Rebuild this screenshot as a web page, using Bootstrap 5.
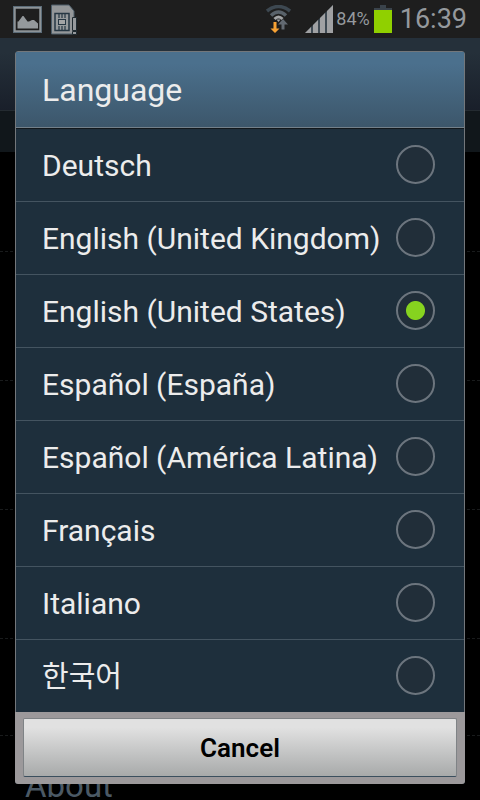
<!DOCTYPE html>
<html lang="en">
<head>
<meta charset="utf-8">
<meta name="viewport" content="width=device-width, initial-scale=1">
<title>Language</title>
<link href="https://cdn.jsdelivr.net/npm/bootstrap@5.3.0/dist/css/bootstrap.min.css" rel="stylesheet">
<style>
  body { background: #000; color: #ececec; font-family: Roboto, "Noto Sans CJK KR", sans-serif; }
  .status-bar { height: 38px; background: #1e1e1e; color: #95999d; padding: 0 13px; }
  .status-bar svg { display: block; flex: none; }
  .signal { margin-left: 14px; }
  .percent { font-size: 18px; line-height: 38px; margin: 0 4px 0 3px; }
  .clock { font-size: 27px; line-height: 38px; margin-left: 8px; }
  .screen-title { height: 73px; background: linear-gradient(#25303a 20%, #191f2a); border-bottom: 1px solid #242b31; }
  .screen-section { height: 41px; background: #11171b; }
  .setting { height: 129px; border-bottom: 1px dashed #191b1c; }
  .setting-first { height: 100px; }
  .setting-last { height: 97px; }
  .about { padding: 34px 25px 0; font-size: 33px; line-height: 32px; height: 66px; color: #4b5965; }
  .language-dialog { top: 51px; left: 15px; right: 15px; border-radius: 3px; background: #1e2f3c; overflow: hidden; }
  .dialog-top { border: 1px solid #73777b; border-bottom: 0; border-radius: 3px 3px 0 0; }
  .dialog-title { height: 77px; margin: 0; padding-left: 26px; font-size: 32px; line-height: 77px; font-weight: 400;
    background: linear-gradient(#4b708d 15%, #3c566a); border-bottom: 1px solid #12181c; box-shadow: inset 0 -1px #73808a; }
  .option { height: 73px; padding: 0 29px 0 26px; font-size: 30px; line-height: 36px; border-bottom: 1px solid #445460; cursor: pointer; white-space: nowrap; }
  .option:last-child { height: 72px; border-bottom: 0; }
  .option span { padding-top: 2px; }
  .option span:lang(ko) { font-size: 29px; }
  .option input { appearance: none; flex: none; width: 39px; height: 39px; margin: 0 0 2px; border: 2px solid #6c757e; border-radius: 50%; background: #212e39; }
  .option input:checked { background: radial-gradient(circle, #86d31f 0 9px, #212e39 10px); }
  .dialog-actions { background: #9c999b; padding: 6px 8px 7px; }
  .cancel { height: 59px; border: 1px solid #7f8386; border-bottom-color: #3b4f5e; border-radius: 2px; color: #000;
    background: linear-gradient(#e1e1e1 15%, #a8aaaa); font-size: 26px; line-height: 30px; font-weight: 600; }
</style>
<script src="https://cdn.jsdelivr.net/npm/bootstrap@5.3.0/dist/js/bootstrap.bundle.min.js"></script>
</head>
<body>
<div class="position-relative vh-100 overflow-hidden">
  <header class="status-bar d-flex align-items-center">
    <svg width="29" height="27" viewBox="0 0 29 27" aria-hidden="true">
      <rect x="1.500" y="1.500" width="26" height="24" fill="#1e1e1e" stroke="#8d9397" stroke-width="2.500"/>
      <rect x=".5" y=".5" width="28" height="26" fill="none" stroke="#5c6c78"/>
      <path d="M4.500 22.500v-7h1l4-5.500h1l4 5.500h1.500l3-1.500h2l4 3.500v5z" fill="#94999c"/>
    </svg>
    <svg class="ms-2" width="27" height="31" viewBox="0 0 27 31" aria-hidden="true">
      <path d="M1.500 1H19l5 6v23H1.500z" fill="#949799" stroke="#4c5d69"/>
      <path d="M5 9.500h14v17H5z" fill="#969a9c" stroke="#263743" stroke-width="1.500"/>
      <path d="M9 10v4m3-4v4m3-4v4M9 22v4m3-4v4m3-4v4" stroke="#263743" stroke-width="1.200"/>
      <rect x="8.500" y="15.500" width="7" height="5" fill="#a2a4a5" stroke="#263743"/>
      <path d="M22.500 13.500h4v13h-4zM22.500 27.500h4v3h-4z" fill="#96999c" stroke="#1e292f"/>
    </svg>
    <svg class="ms-auto" width="25" height="28" viewBox="0 0 25 28" aria-hidden="true">
      <g fill="none" stroke-width="3.500">
        <path d="M1 6Q12.500-3 24 6" stroke="#3d4851"/>
        <path d="M5 10.500Q12.500 3.500 20 10.500" stroke="#59626a"/>
        <path d="M8.500 14Q12.500 10 16.500 14" stroke="#a2a4a6" stroke-width="3"/>
      </g>
      <path d="M10.500 14.500h4l-2 2.500z" fill="#a2a4a6"/>
      <path d="M7.500 17h3v6.500h3L9 28l-4.500-4.500h3z" fill="#f8a234"/>
      <path d="M17 14l5 5.500h-3.500v5h-3v-5H12z" fill="#626971"/>
    </svg>
    <svg class="signal" width="28" height="28" viewBox="0 0 28 28" aria-hidden="true">
      <path d="M0 28L28 0v28z" fill="#3f4a53"/>
      <path d="M0 28l6-6v6zM8 28v-8l5-5v13zM15 28V13l5-5v20zM22 28V6l6-6v28z" fill="#a0a1a3"/>
    </svg>
    <span class="percent">84%</span>
    <svg width="18" height="28" viewBox="0 0 18 28" aria-hidden="true">
      <path d="M6 0h6v3h6v2H0V3h6z" fill="#3a434b"/>
      <path d="M0 5h18v23H0z" fill="#90d000"/>
    </svg>
    <span class="clock">16:39</span>
  </header>
  <main aria-hidden="true">
    <div class="screen-title"></div>
    <div class="screen-section"></div>
    <div class="setting setting-first"></div>
    <div class="setting"></div>
    <div class="setting"></div>
    <div class="setting"></div>
    <div class="setting setting-last"></div>
    <div class="about">About</div>
  </main>

  <form class="language-dialog position-absolute" role="dialog" aria-labelledby="dialog-title">
    <div class="dialog-top">
      <h1 class="dialog-title" id="dialog-title">Language</h1>
      <div role="radiogroup" aria-labelledby="dialog-title">
        <label class="option d-flex align-items-center justify-content-between" for="de"><span>Deutsch</span><input type="radio" name="language" id="de"></label>
        <label class="option d-flex align-items-center justify-content-between" for="en-gb"><span>English (United Kingdom)</span><input type="radio" name="language" id="en-gb"></label>
        <label class="option d-flex align-items-center justify-content-between" for="en-us"><span>English (United States)</span><input type="radio" name="language" id="en-us" checked></label>
        <label class="option d-flex align-items-center justify-content-between" for="es-es"><span>Español (España)</span><input type="radio" name="language" id="es-es"></label>
        <label class="option d-flex align-items-center justify-content-between" for="es-la"><span>Español (América Latina)</span><input type="radio" name="language" id="es-la"></label>
        <label class="option d-flex align-items-center justify-content-between" for="fr"><span>Français</span><input type="radio" name="language" id="fr"></label>
        <label class="option d-flex align-items-center justify-content-between" for="it"><span>Italiano</span><input type="radio" name="language" id="it"></label>
        <label class="option d-flex align-items-center justify-content-between" for="ko"><span lang="ko">한국어</span><input type="radio" name="language" id="ko"></label>
      </div>
    </div>
    <div class="dialog-actions">
      <button type="button" class="cancel w-100">Cancel</button>
    </div>
  </form>
</div>
</body>
</html>
